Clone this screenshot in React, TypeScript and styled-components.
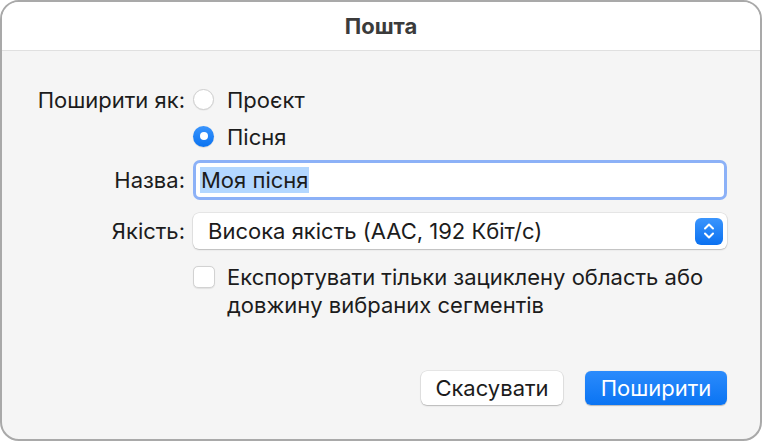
import React, { useState } from 'react';
import styled, { createGlobalStyle } from 'styled-components';

const GlobalStyle = createGlobalStyle`
  html, body {
    margin: 0;
    padding: 0;
    background: #ffffff;
  }
  body {
    font-family: Inter, 'Liberation Sans', sans-serif;
    -webkit-font-smoothing: antialiased;
  }
`;

const Page = styled.div`
  width: 763px;
  height: 442px;
  box-sizing: border-box;
  padding: 0 1px 1px 0;
`;

const Window = styled.div`
  display: flex;
  flex-direction: column;
  width: 100%;
  height: 100%;
  box-sizing: border-box;
  border: 2px solid #a9a9a9;
  border-radius: 19px;
  overflow: hidden;
  background: #f5f5f5;
`;

const TitleBar = styled.div`
  display: flex;
  align-items: center;
  justify-content: center;
  height: 48px;
  flex: none;
  background: #ffffff;
  border-bottom: 1px solid #e0e0e0;
  font-size: 22px;
  font-weight: 700;
  color: #3b3b3b;
`;

const Body = styled.div`
  flex: 1;
  display: flex;
  flex-direction: column;
  padding: 34px 33px 34px 0;
`;

const Form = styled.div`
  display: grid;
  grid-template-columns: 183px 1fr;
  column-gap: 8px;
  align-items: center;
  color: #1c1c1c;
  font-size: 22px;
`;

const Label = styled.div<{ $top?: number }>`
  justify-self: end;
  margin-top: ${(p) => p.$top ?? 0}px;
`;

const Cell = styled.div<{ $top?: number }>`
  display: flex;
  align-items: center;
  margin-top: ${(p) => p.$top ?? 0}px;
`;

const RadioRow = styled.label`
  display: flex;
  align-items: center;
  gap: 13px;
  height: 30px;
  cursor: default;
`;

const RadioDot = styled.span<{ $on: boolean }>`
  width: 21px;
  height: 21px;
  margin-top: -2px;
  box-sizing: border-box;
  border-radius: 50%;
  display: flex;
  align-items: center;
  justify-content: center;
  background: ${(p) => (p.$on ? 'linear-gradient(#3a95fd, #0a72f0)' : '#ffffff')};
  border: ${(p) => (p.$on ? 'none' : '1px solid #cfcfcf')};
  box-shadow: ${(p) => (p.$on ? '0 0.5px 1px rgba(0,0,0,0.2)' : '0 0.5px 1px rgba(0,0,0,0.08)')};

  &::after {
    content: '';
    display: ${(p) => (p.$on ? 'block' : 'none')};
    width: 8px;
    height: 8px;
    border-radius: 50%;
    background: #ffffff;
  }
`;

const TextField = styled.div`
  flex: 1;
  height: 34px;
  display: flex;
  align-items: center;
  padding: 0 4px;
  background: #ffffff;
  border-radius: 4px;
  box-shadow: 0 0 0 3px #8cb1f7;
  margin: 3px;
`;

const Selected = styled.span`
  background: #b3d7ff;
  line-height: 26px;
  padding: 0 1px;
`;

const Popup = styled.div`
  flex: 1;
  height: 36px;
  display: flex;
  align-items: center;
  justify-content: space-between;
  padding: 0 4px 0 15px;
  background: #ffffff;
  border-radius: 6px;
  box-shadow: 0 0 0 0.5px rgba(0, 0, 0, 0.12), 0 1px 1.5px rgba(0, 0, 0, 0.18);
`;

const Stepper = styled.span`
  width: 28px;
  height: 27px;
  border-radius: 6px;
  background: linear-gradient(#3b95fd, #0b71f0);
  display: flex;
  align-items: center;
  justify-content: center;
`;

const CheckRow = styled.label`
  display: flex;
  align-items: flex-start;
  gap: 12px;
  line-height: 28px;
`;

const CheckBox = styled.span`
  flex: none;
  width: 22px;
  height: 22px;
  margin-top: 3px;
  box-sizing: border-box;
  border-radius: 5px;
  background: #ffffff;
  border: 1px solid #d2d2d2;
  box-shadow: 0 0.5px 1px rgba(0, 0, 0, 0.08);
`;

const Footer = styled.div`
  margin-top: auto;
  display: flex;
  justify-content: flex-end;
  gap: 22px;
`;

const Button = styled.button<{ $primary?: boolean }>`
  width: 142px;
  height: 34px;
  border: none;
  border-radius: 6px;
  font-family: inherit;
  font-size: 22px;
  color: ${(p) => (p.$primary ? '#ffffff' : '#1c1c1c')};
  background: ${(p) => (p.$primary ? 'linear-gradient(#2b8bfc, #0a74f3)' : '#ffffff')};
  box-shadow: ${(p) =>
    p.$primary
      ? '0 0.5px 1px rgba(0,0,0,0.25)'
      : '0 0 0 0.5px rgba(0,0,0,0.12), 0 1px 1.5px rgba(0,0,0,0.2)'};
`;

const StepperIcon = () => (
  <svg width="14" height="20" viewBox="0 0 14 20" fill="none">
    <path d="M3 7.5 L7 3.5 L11 7.5" stroke="#fff" strokeWidth="2" strokeLinecap="round" strokeLinejoin="round" />
    <path d="M3 12.5 L7 16.5 L11 12.5" stroke="#fff" strokeWidth="2" strokeLinecap="round" strokeLinejoin="round" />
  </svg>
);

const App = () => {
  const [shareAs, setShareAs] = useState<'project' | 'song'>('song');

  return (
    <Page>
      <GlobalStyle />
      <Window>
        <TitleBar>Пошта</TitleBar>
        <Body>
          <Form>
            <Label>Поширити як:</Label>
            <Cell>
              <RadioRow onClick={() => setShareAs('project')}>
                <RadioDot $on={shareAs === 'project'} />
                Проєкт
              </RadioRow>
            </Cell>

            <div />
            <Cell $top={7}>
              <RadioRow onClick={() => setShareAs('song')}>
                <RadioDot $on={shareAs === 'song'} />
                Пісня
              </RadioRow>
            </Cell>

            <Label $top={8}>Назва:</Label>
            <Cell $top={8}>
              <TextField>
                <Selected>Моя пісня</Selected>
              </TextField>
            </Cell>

            <Label $top={13}>Якість:</Label>
            <Cell $top={13}>
              <Popup>
                Висока якість (AAC, 192 Кбіт/с)
                <Stepper>
                  <StepperIcon />
                </Stepper>
              </Popup>
            </Cell>

            <div />
            <Cell $top={14}>
              <CheckRow>
                <CheckBox />
                <span>
                  Експортувати тільки зациклену область або
                  <br />
                  довжину вибраних сегментів
                </span>
              </CheckRow>
            </Cell>
          </Form>
          <Footer>
            <Button>Скасувати</Button>
            <Button $primary>Поширити</Button>
          </Footer>
        </Body>
      </Window>
    </Page>
  );
};

export default App;
